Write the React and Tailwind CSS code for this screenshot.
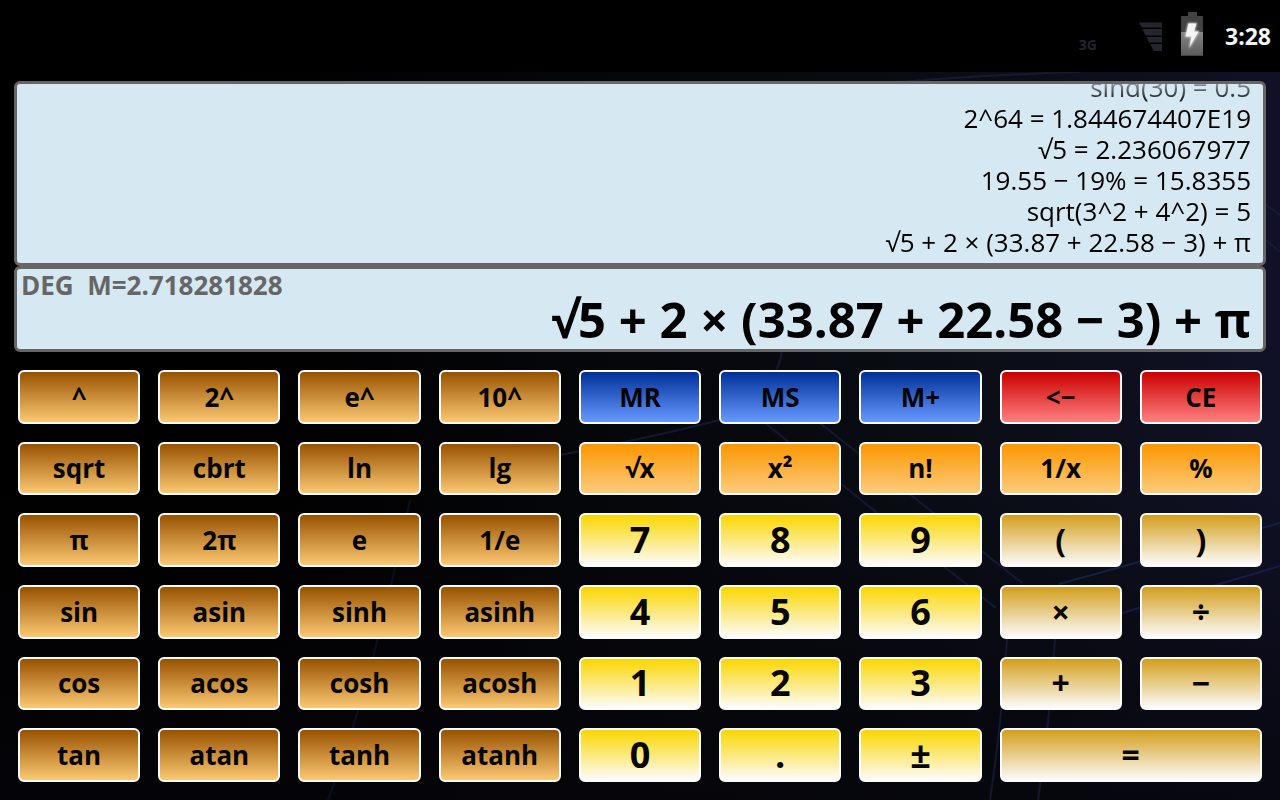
import React, { useState } from 'react';

const history = [
  'sind(30) = 0.5',
  '2^64 = 1.844674407E19',
  '√5 = 2.236067977',
  '19.55 − 19% = 15.8355',
  'sqrt(3^2 + 4^2) = 5',
  '√5 + 2 × (33.87 + 22.58 − 3) + π',
];

const tones = {
  brown: 'from-[#985200] to-[#fcc873] text-[26px]',
  blue: 'from-[#003098] to-[#6699ff] text-[26px]',
  red: 'from-[#cb0000] to-[#ff8080] text-[26px]',
  orange: 'from-[#fc9600] to-[#fccc7c] text-[26px]',
  yellow: 'from-[#fbd600] to-[#fcfcfc] text-[36px]',
  gold: 'from-[#d39e1c] to-[#fcfcfc] text-[32px]',
};

const rows = [
  { left: ['^', '2^', 'e^', '10^'], mid: ['MR', 'MS', 'M+'], midTone: 'blue', right: ['<−', 'CE'], rightTone: 'red' },
  { left: ['sqrt', 'cbrt', 'ln', 'lg'], mid: ['√x', 'x²', 'n!'], midTone: 'orange', right: ['1/x', '%'], rightTone: 'orange' },
  { left: ['π', '2π', 'e', '1/e'], mid: ['7', '8', '9'], midTone: 'yellow', right: ['(', ')'], rightTone: 'gold' },
  { left: ['sin', 'asin', 'sinh', 'asinh'], mid: ['4', '5', '6'], midTone: 'yellow', right: ['×', '÷'], rightTone: 'gold' },
  { left: ['cos', 'acos', 'cosh', 'acosh'], mid: ['1', '2', '3'], midTone: 'yellow', right: ['+', '−'], rightTone: 'gold' },
  { left: ['tan', 'atan', 'tanh', 'atanh'], mid: ['0', '.', '±'], midTone: 'yellow', right: ['='], rightTone: 'gold' },
];

const Key = ({ label, tone, onPress }) => (
  <button
    type="button"
    onClick={() => onPress(label)}
    className={`flex items-center justify-center rounded-md border-2 border-[#fcfcfc] bg-linear-to-b/srgb font-bold leading-8 text-[#050505] active:brightness-90 ${tones[tone]} ${label === '=' ? 'col-span-2' : ''}`}
  >
    {label}
  </button>
);

const SignalIcon = () => (
  <svg className="h-[29px] w-[23px]" viewBox="0 0 23 29" fill="#252530" aria-hidden="true">
    <path d="M0 0.500H23V5.500H2.700Z" />
    <path d="M3.200 7H23V13.500H6.600Z" />
    <path d="M7.200 15H23V20.500H10.200Z" />
    <path d="M11 22H23V29H14.800Z" />
  </svg>
);

const BatteryIcon = () => (
  <svg className="h-11 w-[22px]" viewBox="0 0 22 44" aria-hidden="true">
    <defs>
      <linearGradient id="charge" x1="0" y1="0" x2="0" y2="1">
        <stop offset="0" stopColor="#858585" />
        <stop offset="1" stopColor="#5c5c5c" />
      </linearGradient>
      <filter id="glow" x="-50%" y="-50%" width="200%" height="200%">
        <feGaussianBlur stdDeviation="1.200" />
      </filter>
    </defs>
    <path d="M7 0H16V4H22V44H0V4H7Z" fill="#424242" />
    <path d="M0 20H22V43H0Z" fill="url(#charge)" />
    <path d="M7 11H16L13.500 19H18.500L8 37L10 25H4Z" fill="#ddd" filter="url(#glow)" />
    <path d="M7.500 11.500H15.500L13 19.500H17.500L8.500 35L10.500 24.500H4.500Z" fill="#f4f4f4" />
  </svg>
);

const Wallpaper = () => (
  <svg
    className="pointer-events-none absolute inset-0 -z-10 h-full w-full"
    viewBox="0 0 1280 800"
    preserveAspectRatio="none"
    fill="none"
    aria-hidden="true"
  >
    <defs>
      <linearGradient id="night" x1="0" y1="0" x2="1" y2="0">
        <stop offset="0.180" stopColor="#000" />
        <stop offset="0.550" stopColor="#07080d" />
        <stop offset="0.800" stopColor="#0b0e18" />
        <stop offset="1" stopColor="#101126" />
      </linearGradient>
      <linearGradient id="floor" x1="0" y1="0" x2="0" y2="1">
        <stop offset="0.600" stopColor="#05050a" stopOpacity="0" />
        <stop offset="1" stopColor="#05050a" stopOpacity="0.800" />
      </linearGradient>
    </defs>
    <rect width="1280" height="800" fill="url(#night)" />
    <rect width="1280" height="800" fill="url(#floor)" />
    <g stroke="#191b3c" strokeWidth="2" opacity="0.800">
      <path d="M560 455Q640 440 720 420" />
      <path d="M765 423L996 608" />
      <path d="M820 423L1022 583" />
      <path d="M1059 584Q1160 556 1280 523" stroke="#16264a" />
      <path d="M1122 613Q1200 590 1280 566" stroke="#211c50" />
      <path d="M410 500Q370 690 328 800" stroke="#0d1128" />
      <path d="M1007 638Q1002 720 990 800M1055 638Q1050 720 1038 800" />
      <path d="M782 352Q780 362 776 372" />
      <path d="M1266 205L1280 215M1266 240L1280 252" />
      <path d="M900 82Q1000 74 1080 72" />
    </g>
  </svg>
);

export default function App() {
  const [expression, setExpression] = useState('√5 + 2 × (33.87 + 22.58 − 3) + π');

  const handleKey = (label) => {
    if (label === 'CE') {
      setExpression('');
    } else if (label === '<−') {
      setExpression(expression.slice(0, -1));
    } else if (!['MR', 'MS', 'M+', '=', '±'].includes(label)) {
      setExpression(expression + label);
    }
  };

  return (
    <div className="relative isolate flex min-h-screen flex-col bg-black font-['Open_Sans','Noto_Sans',sans-serif]">
      <Wallpaper />

      {/* Status bar */}
      <header className="flex h-[72px] items-center justify-end bg-black pr-[9px]">
        <span className="mr-[42px] pt-[18px] text-sm font-bold text-[#252530]">3G</span>
        <SignalIcon />
        <span className="ml-[19px] mr-[22px] pb-1">
          <BatteryIcon />
        </span>
        <time className="text-[23px] font-bold text-[#f4f4f4]">3:28</time>
      </header>

      <main className="flex flex-1 flex-col px-[14px] pb-[18px] pt-[9px]">
        {/* History */}
        <section className="flex h-[185px] flex-col justify-end overflow-hidden rounded-md border-3 border-[#666] bg-[#d6e8f2]">
          <ul className="flex h-full flex-col justify-end overflow-hidden px-3 pb-[5px] text-right text-[26px] leading-[31px] text-black mask-t-from-[160px] mask-t-to-[190px]">
            {history.map((line) => (
              <li key={line} className="shrink-0">{line}</li>
            ))}
          </ul>
        </section>

        {/* Current expression */}
        <section className="h-[86px] overflow-hidden rounded-md border-3 border-[#666] bg-[#d6e8f2] pt-1">
          <p className="whitespace-pre pl-1 text-[26px] font-bold leading-6 text-[#666]">DEG  M=2.718281828</p>
          <input
            type="text"
            aria-label="Expression"
            value={expression}
            onChange={(e) => setExpression(e.target.value)}
            className="-mt-1 block h-[54px] w-full bg-transparent px-3 text-right text-[49px] font-bold text-black outline-none"
          />
        </section>

        {/* Keypad */}
        <section className="mt-[18px] grid flex-1 auto-rows-fr grid-cols-9 gap-[18px] px-1">
          {rows.map((row) => (
            <React.Fragment key={row.left[0]}>
              {row.left.map((label) => (
                <Key key={label} label={label} tone="brown" onPress={handleKey} />
              ))}
              {row.mid.map((label) => (
                <Key key={label} label={label} tone={row.midTone} onPress={handleKey} />
              ))}
              {row.right.map((label) => (
                <Key key={label} label={label} tone={row.rightTone} onPress={handleKey} />
              ))}
            </React.Fragment>
          ))}
        </section>
      </main>
    </div>
  );
}
